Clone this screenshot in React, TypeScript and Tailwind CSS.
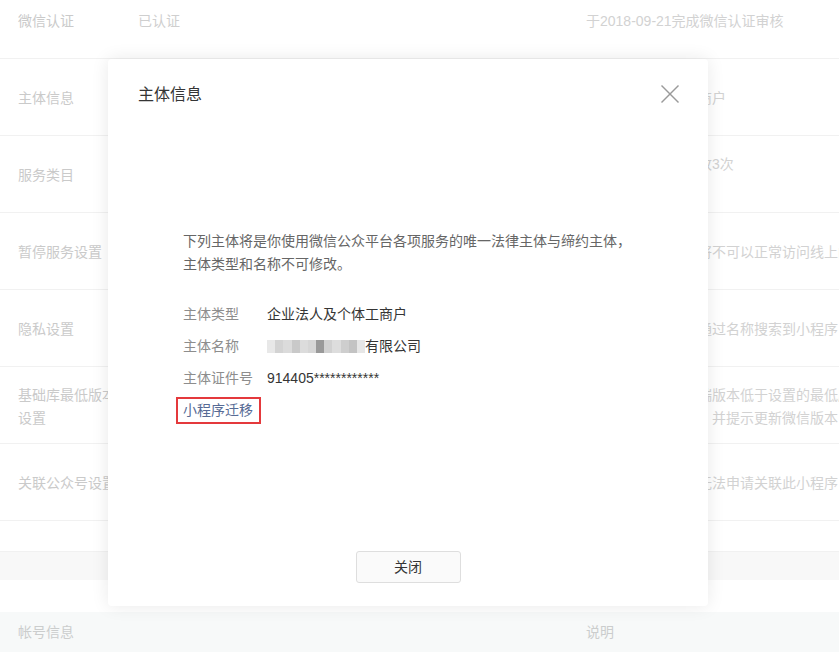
import React from "react";

const FONT = {
  fontFamily: '"Liberation Sans", "Noto Sans CJK SC", sans-serif',
};

type Row = { label: React.ReactNode; mid?: string; right: React.ReactNode };

const rows: Row[] = [
  { label: "微信认证", mid: "已认证", right: "于2018-09-21完成微信认证审核" },
  { label: "主体信息", right: "企业法人及个体工商户" },
  {
    label: "服务类目",
    right: (
      <div className="flex flex-col leading-[23px]">
        <span>一个月内可申请修改3次</span>
        <span>详情</span>
      </div>
    ),
  },
  { label: "暂停服务设置", right: "暂停服务后，用户将不可以正常访问线上的小程序" },
  { label: "隐私设置", right: "开启后，用户可以通过名称搜索到小程序" },
  {
    label: (
      <div className="flex flex-col leading-[23px]">
        <span>基础库最低版本</span>
        <span>设置</span>
      </div>
    ),
    right: (
      <div className="flex flex-col leading-[23px]">
        <span>当用户的微信客户端版本低于设置的最低版本时</span>
        <span>将无法使用小程序，并提示更新微信版本</span>
      </div>
    ),
  },
  { label: "关联公众号设置", right: "关闭后，公众号将无法申请关联此小程序" },
];

const blurBlocks = [
  "#e6e6e6",
  "#cfcfcf",
  "#d8d8d8",
  "#c4c4c4",
  "#d9d9d9",
  "#d2d2d2",
  "#8f8f8f",
  "#cdcdcd",
  "#dadada",
  "#c9c9c9",
  "#bdbdbd",
  "#e4e4e4",
];

export default function App() {
  return (
    <div
      className="relative w-[839px] h-[652px] overflow-hidden bg-white text-[14px]"
      style={FONT}
    >
      {/* Background page */}
      <div className="-mt-[18px] flex flex-col">
        {rows.map((r, i) => (
          <div
            key={i}
            className="flex h-[77px] items-center border-b border-[#f1f1f1] pt-[3px] whitespace-nowrap"
          >
            <div className="w-[138px] shrink-0 pl-[18px] text-[#cacaca]">{r.label}</div>
            <div className="w-[448px] shrink-0 text-[#cfcfcf]">{r.mid}</div>
            <div className="flex-1 text-[#d2d2d2]">{r.right}</div>
          </div>
        ))}
        <div className="h-[31px] border-b border-[#f1f1f1]" />
        <div className="h-[28px] bg-[#f8f8f8]" />
        <div className="h-[32px]" />
        <div className="flex h-[44px] items-center bg-[#f7f9f9] text-[#cbcdcd] pb-[4px]">
          <div className="w-[138px] shrink-0 pl-[18px]">帐号信息</div>
          <div className="w-[448px] shrink-0" />
          <div>说明</div>
        </div>
      </div>

      {/* Dialog */}
      <div className="absolute left-[108px] top-[59px] flex h-[547px] w-[600px] flex-col rounded-[4px] bg-white shadow-[0_0_18px_rgba(0,0,0,0.09)]">
        <div className="px-[30px] pt-[25px] text-[16px] leading-[22px] text-[#353535]">
          主体信息
        </div>
        <button className="absolute right-[29px] top-[26px] h-[18px] w-[18px]">
          <svg viewBox="0 0 18 18" width="18" height="18">
            <line x1="0.5" y1="0.5" x2="17.5" y2="17.5" stroke="#9a9a9a" strokeWidth="1.4" />
            <line x1="17.5" y1="0.5" x2="0.5" y2="17.5" stroke="#9a9a9a" strokeWidth="1.4" />
          </svg>
        </button>

        <div className="mt-[124px] px-[75px]">
          <p className="leading-[23px] text-[#666666]">
            下列主体将是你使用微信公众平台各项服务的唯一法律主体与缔约主体，
            <br />
            主体类型和名称不可修改。
          </p>
          <div className="mt-[22px] flex flex-col">
            <div className="flex h-[32px] items-center">
              <span className="w-[84px] text-[#8d8d8d]">主体类型</span>
              <span className="text-[#353535]">企业法人及个体工商户</span>
            </div>
            <div className="flex h-[32px] items-center">
              <span className="w-[84px] text-[#8d8d8d]">主体名称</span>
              <span className="flex h-[13px] w-[98px] items-stretch opacity-90">
                {blurBlocks.map((c, i) => (
                  <span key={i} className="flex-1" style={{ backgroundColor: c }} />
                ))}
              </span>
              <span className="text-[#353535]">有限公司</span>
            </div>
            <div className="flex h-[32px] items-center">
              <span className="w-[84px] text-[#8d8d8d]">主体证件号</span>
              <span className="text-[#353535]">914405************</span>
            </div>
            <div className="flex h-[32px] items-center">
              <span className="-ml-[7px] border-2 border-[#e4393c] pl-[5px] pr-[6px] leading-[23px] text-[#576b95]">
                小程序迁移
              </span>
            </div>
          </div>
        </div>

        <div className="mt-auto flex justify-center pb-[23px]">
          <button className="h-[32px] w-[105px] rounded-[3px] border border-[#dedede] bg-[#fafafa] text-[14px] text-[#353535]">
            关闭
          </button>
        </div>
      </div>
    </div>
  );
}
